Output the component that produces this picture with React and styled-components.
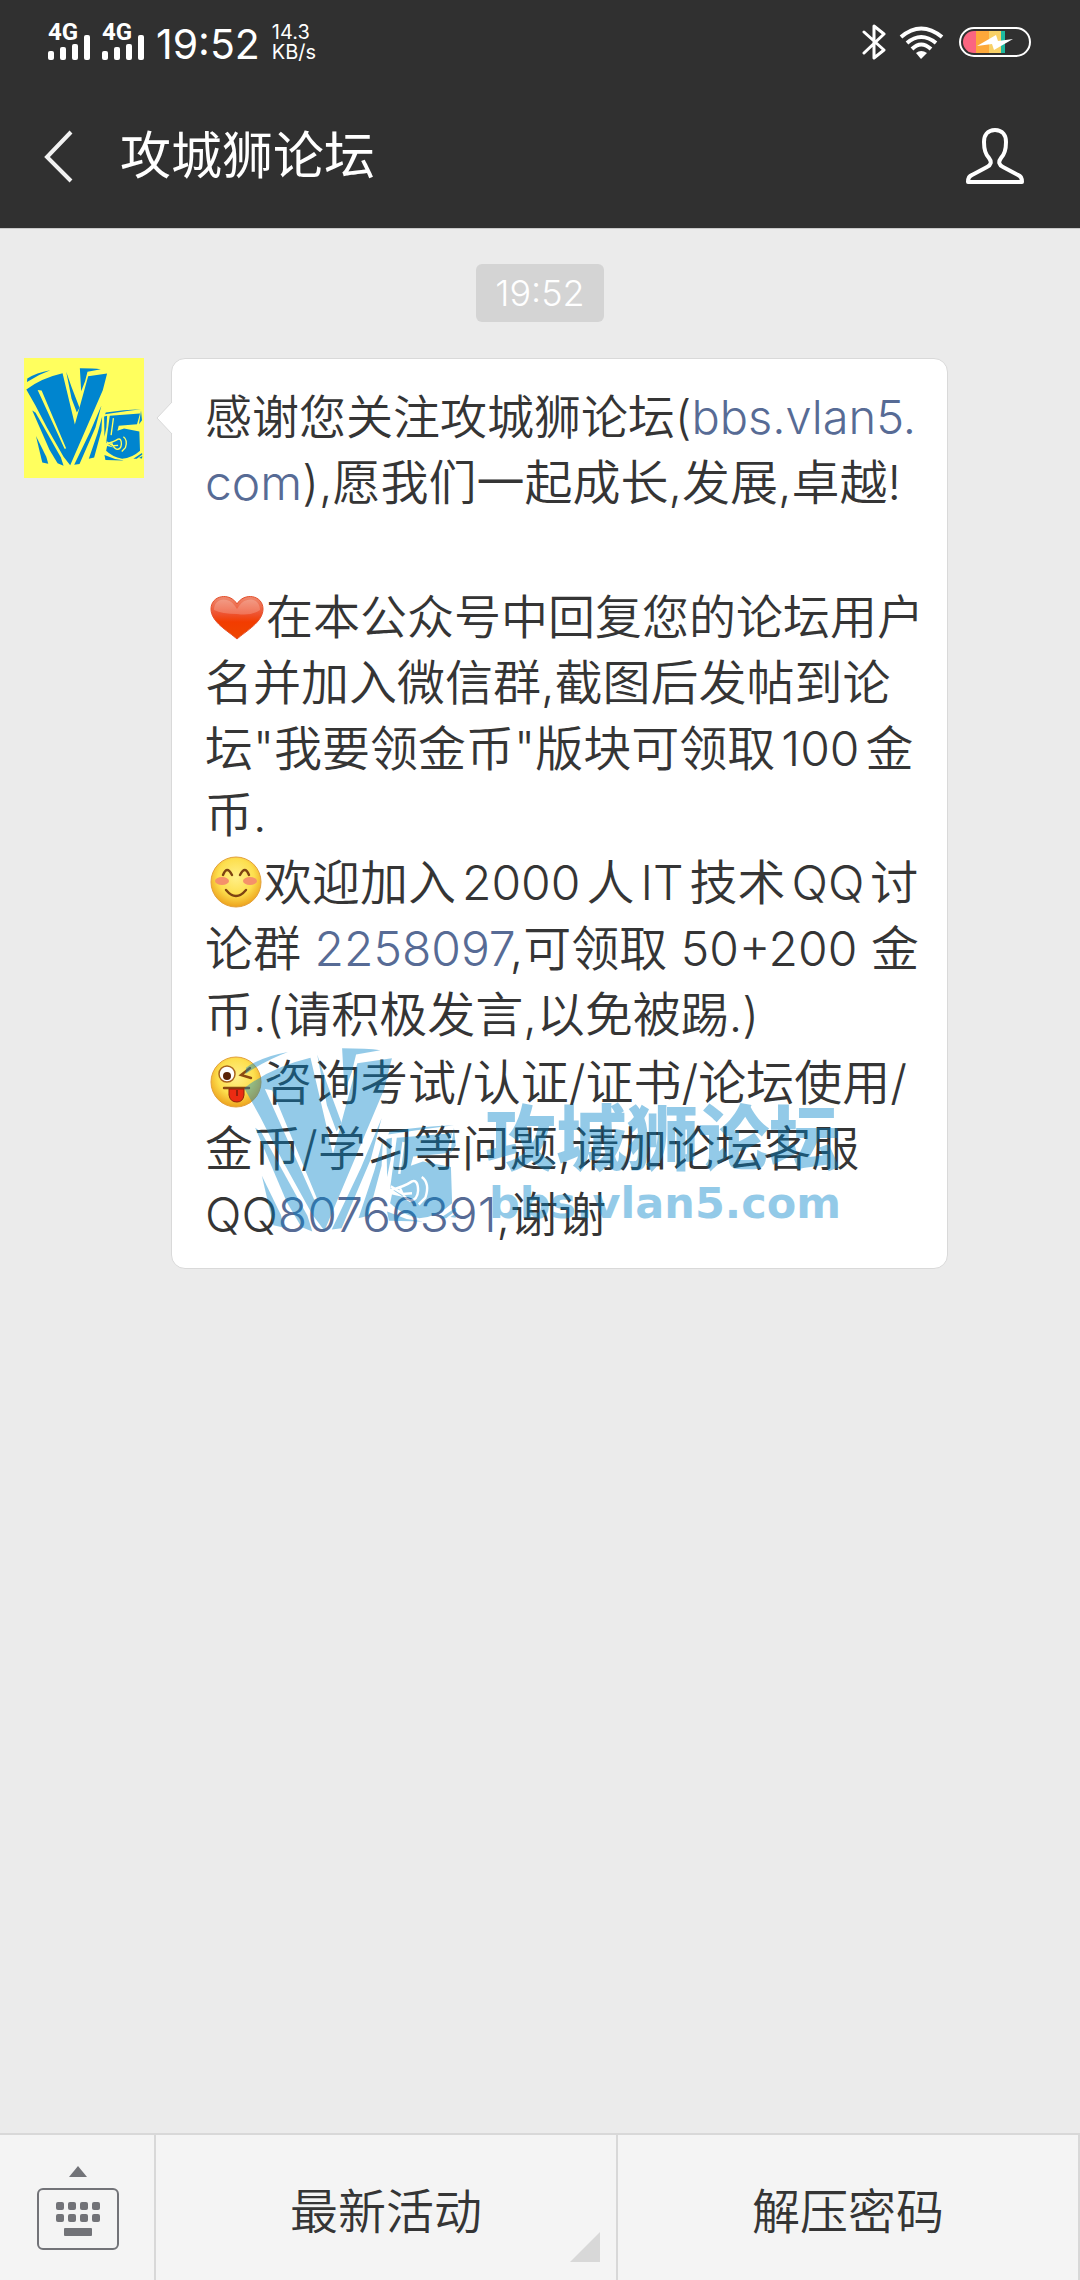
import React from "react";
import styled, { createGlobalStyle } from "styled-components";

const GlobalStyle = createGlobalStyle`
  * { box-sizing: border-box; }
  body {
    margin: 0;
    background: #ebebeb;
    font-family: Inter, "Noto Sans CJK SC", sans-serif;
    color: #353535;
  }
  button { font: inherit; color: inherit; border: 0; background: none; padding: 0; }
  svg { display: block; flex: none; }
`;

const Page = styled.div`
  min-height: 100vh;
  display: flex;
  flex-direction: column;
`;

const Top = styled.header`
  background: #303030;
  color: #fff;
  border-bottom: 1px solid #c8c8c8;
`;

const StatusBar = styled.div`
  height: 84px;
  padding: 0 48px;
  display: flex;
  align-items: center;
  justify-content: space-between;
`;

const StatusGroup = styled.div`
  display: flex;
  align-items: center;
  gap: 12px;
`;

const Signal = styled.div`
  display: grid;
  width: 42px;
  height: 36px;
  > * { grid-area: 1 / 1; }
`;

const Network = styled.span`
  font: 700 24px/16px Roboto, sans-serif;
`;

const Clock = styled.span`
  padding-top: 4px;
  font-size: 41px;
  line-height: 48px;
`;

const Speed = styled.span`
  display: flex;
  flex-direction: column;
  font-size: 20px;
  line-height: 20px;
`;

const TitleBar = styled.div`
  height: 144px;
  padding: 0 54px 0 42px;
  display: flex;
  align-items: center;
`;

const IconButton = styled.button`
  display: flex;
  align-items: center;
`;

const Title = styled.h1`
  flex: 1;
  margin: 0 0 0 44px;
  font-size: 51px;
  line-height: 60px;
  font-weight: 400;
`;

const Chat = styled.main`
  flex: 1;
  display: flex;
  flex-direction: column;
  padding-top: 35px;
  gap: 36px;
`;

const Timestamp = styled.time`
  align-self: center;
  padding: 0 19px;
  border-radius: 6px;
  background: #d4d4d4;
  color: #fff;
  font-size: 36px;
  line-height: 58px;
  font-weight: 350;
`;

const Message = styled.article`
  display: flex;
  align-items: flex-start;
  gap: 27px;
  padding: 0 132px 0 24px;
`;

const Avatar = styled.div`
  flex: none;
  background: #ffff5e;
`;

const Bubble = styled.div`
  position: relative;
  flex: 1;
  min-width: 0;
  display: flex;
  flex-direction: column;
  gap: 2px;
  padding: 25px 33px 20px;
  border: 1px solid #d9d9d9;
  border-radius: 14px;
  background: #fff;
`;

const Tail = styled.svg`
  position: absolute;
  left: -16px;
  top: 42px;
`;

const Paragraph = styled.p`
  margin: 0;
  line-height: 66px;
  font-weight: 350;
  white-space: nowrap;
  text-autospace: normal;
`;

const Line = styled.span`
  display: block;
  min-height: 66px;
  font-size: ${(p) => (p.$dense ? 47 : 48)}px;
`;

const Link = styled.a`
  color: #576b95;
  text-decoration: none;
`;

const Emoji = styled.svg`
  && { display: inline-block; }
  margin: 0 2px 0 5px;
  vertical-align: -8px;
`;

const Watermark = styled.div`
  position: absolute;
  left: 71px;
  top: 688px;
  display: flex;
  gap: 28px;
  color: #0083c9;
  opacity: 0.42;
  pointer-events: none;
`;

const WatermarkText = styled.div`
  display: flex;
  flex-direction: column;
  gap: 4px;
  padding-top: 50px;
`;

const WatermarkName = styled.span`
  font: 900 71px/72px "Noto Sans CJK SC", sans-serif;
`;

const WatermarkSite = styled.span`
  padding-left: 4px;
  font: 700 43px/60px "DejaVu Sans", sans-serif;
`;

const Menu = styled.nav`
  display: flex;
  height: 147px;
  border-top: 2px solid #d8d8d8;
  background: #f4f4f4;
`;

const KeyboardButton = styled.button`
  width: 156px;
  padding-left: 2px;
  display: flex;
  flex-direction: column;
  align-items: center;
  justify-content: center;
  gap: 11px;
  border-right: 2px solid #d8d8d8;
`;

const MenuButton = styled.button`
  position: relative;
  flex: 1;
  border-right: 2px solid #d8d8d8;
  font-size: 48px;
  font-weight: 350;
`;

const Corner = styled.svg`
  position: absolute;
  right: 16px;
  bottom: 18px;
`;

function LogoShapes({ cut }) {
  return (
    <g fill="currentColor">
      <path d="M48 148Q92 114 157 99L194 253 234 108 291 100 278 150 180 376 160 350 110 262 75 195ZM82 149 163 326 168 325 94 151Z" fillRule="evenodd" />
      <path d="M50 125 51 115Q78 97 120 90Q84 103 50 125Z" />
      <path d="M168 94 184 140 208 203 200 217 184 175Z" />
      <path d="M209 84Q250 84 272 87L232 94 225 122 213 153Z" />
      <path d="M66 211 76 218 152 352 160 377 142 370 118 330Z" />
      <path d="M77 288 108 350 114 371 96 367Z" />
      <path d="M274 196 256 262 208 372 192 374 240 275Z" />
      <path d="M276 230 274 272 252 352 236 356 262 280Z" />
      <path d="M285 222 287 217Q342 208 393 207 340 213 285 222Z" />
      <path d="M282 229 291 227 289 262 283 290Z" />
      <path d="M299 227 390 220 381 252 326 257 322 272 342 265 388 274 390 332Q366 354 336 356 306 350 288 332L291 318 310 322 288 308Z" />
      <path d="M283 345 315 357 343 361 286 360Z" />
      <path d="M393 211 396 240 387 252ZM370 356 396 339 397 343 380 356ZM387 354 397 348 396 355Z" />
      <path d="M310 234 303 285M289 311Q312 305 324 297 334 294 334 312 333 327 321 328 311 325 304 307M340 290Q354 300 346 323L335 334M289 305 309 317 324 316" fill="none" stroke={cut} strokeWidth="4" />
    </g>
  );
}

function SignalBars() {
  return (
    <Signal>
      <Network>4G</Network>
      <svg width="42" height="36" viewBox="0 0 42 36" fill="#fff" aria-hidden="true">
        <rect x="0" y="27" width="6" height="9" rx="2" />
        <rect x="12" y="23" width="6" height="13" rx="2" />
        <rect x="24" y="20" width="6" height="16" rx="2" />
        <rect x="36" y="11" width="6" height="25" rx="2" />
      </svg>
    </Signal>
  );
}

function Heart() {
  return (
    <Emoji width="54" height="50" viewBox="0 0 54 50" role="img" aria-label="爱心">
      <defs>
        <linearGradient id="heart" x1="0" y1="0" x2="0" y2="1">
          <stop offset="0" stopColor="#ef8a70" />
          <stop offset=".4" stopColor="#ee5330" />
          <stop offset=".6" stopColor="#f23c00" />
          <stop offset="1" stopColor="#ee4600" />
        </linearGradient>
      </defs>
      <path d="M27 47C18 39 1 30 1 17 1 3 20 0 27 12 34 0 53 3 53 17 53 30 36 39 27 47Z" fill="url(#heart)" stroke="#e4502c" />
      <path d="M4 18C4 6 18 4 25 14L27 17 29 14C36 4 50 6 50 18Q42 24 27 22 12 22 4 18Z" fill="#fff" opacity=".2" />
    </Emoji>
  );
}

function Face({ id, label, children }) {
  return (
    <Emoji width="52" height="52" viewBox="0 0 52 52" role="img" aria-label={label}>
      <defs>
        <radialGradient id={id} cx=".5" cy=".4" r=".6">
          <stop offset="0" stopColor="#fff08a" />
          <stop offset=".6" stopColor="#fddf4e" />
          <stop offset="1" stopColor="#eda21c" />
        </radialGradient>
      </defs>
      <circle cx="26" cy="26" r="25" fill={`url(#${id})`} stroke="#e3a03a" />
      {children}
    </Emoji>
  );
}

function Smile() {
  return (
    <Face id="smile" label="微笑">
      <ellipse cx="12" cy="25" rx="7" ry="4" fill="#f5916a" />
      <ellipse cx="40" cy="25" rx="7" ry="4" fill="#f5916a" />
      <path d="M13 19Q17 9 22 19M30 19Q35 9 39 19M16 34Q26 46 36 34" fill="none" stroke="#7d4312" strokeWidth="2.4" strokeLinecap="round" />
    </Face>
  );
}

function Wink() {
  return (
    <Face id="wink" label="吐舌">
      <circle cx="17" cy="18" r="8" fill="#fff" stroke="#a8641c" strokeWidth="1.5" />
      <circle cx="17" cy="20" r="4" fill="#5a2408" />
      <path d="M40 12 31 19 41 22M14 32H39" fill="none" stroke="#8b4a10" strokeWidth="2.4" strokeLinecap="round" />
      <path d="M19 33H34V39Q33 46 27 46 20 46 19 39Z" fill="#ec2b12" stroke="#8f2108" />
      <path d="M27 34V40" stroke="#94200c" strokeWidth="2" />
    </Face>
  );
}

export default function App() {
  return (
    <Page>
      <GlobalStyle />
      <Top>
        <StatusBar>
          <StatusGroup>
            <SignalBars />
            <SignalBars />
            <Clock>19:52</Clock>
            <Speed>
              <span>14.3</span>
              <span>KB/s</span>
            </Speed>
          </StatusGroup>
          <StatusGroup>
            <svg width="25" height="36" viewBox="0 0 25 36" fill="none" stroke="#fff" strokeWidth="3" strokeLinecap="round" strokeLinejoin="round" aria-label="蓝牙">
              <path d="M2 8 22 26 12 34V2L22 10 2 29" />
            </svg>
            <svg width="45" height="33" viewBox="0 0 45 33" fill="none" stroke="#fff" strokeWidth="4" aria-label="无线网络">
              <path d="M2 11Q22-6 43 11M8 17Q22 5 37 17M13 23Q22 14 32 23" />
              <path d="M22 33 17 27Q22 23 28 27Z" fill="#fff" stroke="none" />
            </svg>
            <svg width="76" height="30" viewBox="0 0 76 30" aria-label="电量">
              <defs>
                <clipPath id="charge"><rect x="7" y="4" width="63" height="22" rx="11" /></clipPath>
              </defs>
              <g clipPath="url(#charge)">
                <path fill="#fb6580" d="M7 4h13v22H7z" />
                <path fill="#fda83a" d="M20 4h13v22H20z" />
                <path fill="#f7d066" d="M33 4h12v22H33z" />
                <path fill="#1db9a0" d="M45 4h4v22H45z" />
              </g>
              <rect x="4" y="1" width="70" height="28" rx="14" fill="none" stroke="#fff" strokeWidth="2" />
              <path d="M21 19 40 8 42 14 57 12 38 23 36 17Z" fill="#fff" />
            </svg>
          </StatusGroup>
        </StatusBar>
        <TitleBar>
          <IconButton type="button" aria-label="返回">
            <svg width="34" height="54" viewBox="0 0 34 54" fill="none" stroke="#f2f2f2" strokeWidth="4">
              <path d="M29 3 5 28 29 52" />
            </svg>
          </IconButton>
          <Title>攻城狮论坛</Title>
          <IconButton type="button" aria-label="公众号资料">
            <svg width="62" height="56" viewBox="0 0 62 56" fill="none" stroke="#fff" strokeWidth="4" strokeLinejoin="round">
              <path d="M31 2C23 2 20 8 20 14 20 23 22 27 25 30 28 34 27 37 23 39L8 47C5 48 4 50 4 54H58C58 50 57 48 54 47L39 39C35 37 34 34 37 30 40 27 42 23 42 14 42 8 39 2 31 2Z" />
            </svg>
          </IconButton>
        </TitleBar>
      </Top>

      <Chat>
        <Timestamp>19:52</Timestamp>
        <Message>
          <Avatar>
            <svg width="120" height="120" viewBox="41 53 361 361" color="#0085cf" role="img" aria-label="V5">
              <LogoShapes cut="#ffff5e" />
            </svg>
          </Avatar>
          <Bubble>
            <Tail width="17" height="34" viewBox="0 0 17 34" aria-hidden="true">
              <path d="M17 0 1 17 17 34Z" fill="#fff" />
              <path d="M16 1 1 17 16 33" fill="none" stroke="#d9d9d9" />
            </Tail>
            <Paragraph>
              <Line $dense>感谢您关注攻城狮论坛(<Link href="#bbs">bbs.vlan5.</Link></Line>
              <Line><Link href="#bbs">com</Link>),愿我们一起成长,发展,卓越!</Line>
              <Line />
            </Paragraph>
            <Paragraph>
              <Line $dense><Heart />在本公众号中回复您的论坛用户</Line>
              <Line>名并加入微信群,截图后发帖到论</Line>
              <Line>坛"我要领金币"版块可领取100金</Line>
              <Line>币.</Line>
            </Paragraph>
            <Paragraph>
              <Line><Smile />欢迎加入2000人IT技术QQ讨</Line>
              <Line>论群 <Link href="#group">2258097</Link>,可领取 50+200 金</Line>
              <Line>币.(请积极发言,以免被踢.)</Line>
            </Paragraph>
            <Paragraph>
              <Line><Wink />咨询考试/认证/证书/论坛使用/</Line>
              <Line>金币/学习等问题,请加论坛客服</Line>
              <Line>QQ<Link href="#service">80766391</Link>,谢谢</Line>
            </Paragraph>
            <Watermark>
              <svg width="214" height="185" viewBox="46 82 352 296" preserveAspectRatio="none" aria-hidden="true">
                <LogoShapes cut="#fff" />
              </svg>
              <WatermarkText>
                <WatermarkName>攻城狮论坛</WatermarkName>
                <WatermarkSite>bbs.vlan5.com</WatermarkSite>
              </WatermarkText>
            </Watermark>
          </Bubble>
        </Message>
      </Chat>

      <Menu>
        <KeyboardButton type="button" aria-label="切换到键盘">
          <svg width="18" height="11" viewBox="0 0 18 11" fill="#727378"><path d="M9 0 18 11H0Z" /></svg>
          <svg width="82" height="62" viewBox="0 0 82 62" fill="#727378">
            <rect x="1" y="1" width="80" height="60" rx="5" fill="none" stroke="#727378" strokeWidth="2" />
            {[14, 26].map((y) =>
              [19, 31, 43, 55].map((x) => <rect key={`${x}-${y}`} x={x} y={y} width="8" height="8" rx="2" />)
            )}
            <rect x="27" y="40" width="28" height="8" rx="1" />
          </svg>
        </KeyboardButton>
        <MenuButton type="button">
          最新活动
          <Corner width="30" height="30" viewBox="0 0 30 30" fill="#d8d8d8" aria-hidden="true"><path d="M30 0V30H0Z" /></Corner>
        </MenuButton>
        <MenuButton type="button">解压密码</MenuButton>
      </Menu>
    </Page>
  );
}
